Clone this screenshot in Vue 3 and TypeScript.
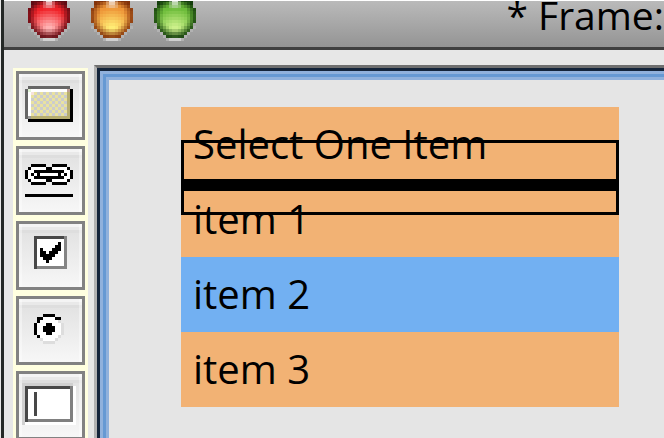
<script setup lang="ts">
import { ref } from 'vue'

interface Layer {
  color: string
  d: string
}
interface Tool {
  name: string
  layers: Layer[]
}

// Each run is [column, row, width, height] on the 23-cell button grid.
type Run = [number, number, number, number]
const draw = (runs: Run[]): string =>
  runs.map(([x, y, w, h]) => `M${x} ${y}h${w}v${h}h${-w}z`).join('')

const checker: Run[] = []
for (let y = 7; y < 15; y++) {
  for (let x = 5; x < 17; x++) {
    if ((x + y) % 2 === 1) checker.push([x, y, 1, 1])
  }
}

const tools: Tool[] = [
  {
    name: 'Button',
    layers: [
      { color: '#666', d: draw([[4, 5, 14, 1], [3, 6, 1, 10]]) },
      { color: '#000', d: draw([[18, 6, 1, 11], [4, 16, 15, 1]]) },
      { color: '#fff', d: draw([[4, 6, 13, 1], [4, 6, 1, 9]]) },
      { color: '#ccc', d: draw([[5, 7, 12, 8]]) },
      { color: '#e9e2a0', d: draw(checker) },
      { color: '#b7ae70', d: draw([[17, 7, 1, 9], [5, 15, 13, 1]]) },
      { color: '#e2f5d8', d: draw([[4, 6, 1, 1]]) },
      { color: '#f7e2dc', d: draw([[5, 7, 1, 1]]) },
      { color: '#c0a098', d: draw([[17, 6, 1, 1]]) },
      { color: '#999', d: draw([[4, 15, 1, 1]]) },
    ],
  },
  {
    name: 'Link',
    layers: [
      { color: '#fff', d: draw([[5, 7, 5, 1], [12, 7, 5, 1], [4, 8, 14, 3], [5, 11, 5, 1], [12, 11, 5, 1]]) },
      {
        color: '#000',
        d: draw([
          [5, 6, 5, 1], [12, 6, 5, 1], [4, 7, 1, 1], [10, 7, 2, 1], [17, 7, 1, 1],
          [3, 8, 1, 3], [18, 8, 1, 3], [6, 8, 10, 1], [5, 9, 1, 1], [7, 9, 1, 1],
          [14, 9, 1, 1], [16, 9, 1, 1], [6, 10, 10, 1], [4, 11, 1, 1], [10, 11, 2, 1],
          [17, 11, 1, 1], [5, 12, 5, 1], [12, 12, 5, 1], [3, 16, 16, 1],
        ]),
      },
    ],
  },
  {
    name: 'Check box',
    layers: [
      { color: '#848484', d: draw([[6, 5, 11, 11]]) },
      { color: '#484848', d: draw([[6, 5, 10, 1], [6, 5, 1, 11]]) },
      { color: '#fff', d: draw([[7, 6, 9, 9]]) },
      {
        color: '#000',
        d: draw([
          [14, 7, 1, 3], [13, 8, 1, 3], [12, 9, 1, 3], [11, 10, 1, 3],
          [8, 9, 1, 3], [9, 10, 1, 3], [10, 11, 1, 3],
        ]),
      },
    ],
  },
  {
    name: 'Radio button',
    layers: [
      { color: '#fff', d: draw([[9, 7, 4, 8], [7, 9, 8, 4], [8, 8, 6, 6]]) },
      {
        color: '#000',
        d: draw([
          [9, 6, 4, 1], [7, 7, 2, 1], [13, 7, 2, 1], [7, 8, 1, 1], [6, 9, 1, 4],
          [7, 13, 1, 1], [10, 9, 2, 4], [9, 10, 4, 2],
        ]),
      },
      {
        color: '#ddd',
        d: draw([[14, 8, 1, 1], [15, 9, 1, 4], [14, 13, 1, 1], [13, 14, 1, 1], [8, 14, 1, 1], [9, 15, 4, 1]]),
      },
    ],
  },
  {
    name: 'Text field',
    layers: [
      { color: '#d0d0d0', d: draw([[2, 4, 17, 1], [2, 4, 1, 14]]) },
      { color: '#fff', d: draw([[19, 5, 1, 13], [3, 17, 17, 1], [4, 6, 14, 10]]) },
      { color: '#808080', d: draw([[18, 5, 1, 12], [4, 16, 15, 1]]) },
      { color: '#484848', d: draw([[3, 5, 15, 1], [3, 5, 1, 12], [6, 7, 1, 8]]) },
    ],
  },
]

type Rgb = [number, number, number]
interface Cell {
  x: number
  y: number
  fill: string
}

const clamp = (v: number): number => Math.min(1, Math.max(0, v))
const mix = (a: Rgb, b: Rgb, t: number): Rgb => [
  a[0] + (b[0] - a[0]) * t,
  a[1] + (b[1] - a[1]) * t,
  a[2] + (b[2] - a[2]) * t,
]

// Left inset of the ball on each row of its 14-cell-wide grid.
const insets = [1, 1, 1, 0, 0, 0, 0, 0, 1, 1, 2, 3, 4]

function shade(mid: Rgb, glow: Rgb, edge: Rgb): Cell[] {
  const cells: Cell[] = []
  insets.forEach((inset, y) => {
    for (let x = inset; x < 14 - inset; x++) {
      const dx = (x - 6.5) / 7
      const dy = (y - 5.2) / 7
      let c = mix(mid, glow, clamp(1.15 - Math.hypot(dx * 1.1, (y - 9.5) / 6)))
      const rim = clamp((Math.hypot(dx, dy) - 0.6) / 0.4)
      const top = clamp((3 - y) / 8)
      c = mix(c, edge, clamp(rim * 0.9 + top))
      if (y < 3 && x > 4 && x < 9) {
        c = mix(c, [255, 255, 255], x === 6 || x === 7 ? 0.8 - y * 0.2 : 0.25)
      }
      cells.push({ x, y, fill: `rgb(${c.map(Math.round).join(',')})` })
    }
  })
  return cells
}

const lights = [
  { name: 'Close', cells: shade([240, 34, 40], [255, 178, 178], [96, 12, 20]) },
  { name: 'Minimize', cells: shade([238, 150, 56], [255, 236, 116], [130, 50, 10]) },
  { name: 'Zoom', cells: shade([108, 188, 58], [204, 240, 138], [20, 62, 12]) },
]
const halo = draw([
  [0, 9, 1, 1], [1, 10, 1, 1], [2, 11, 1, 1], [3, 12, 1, 1],
  [13, 9, 1, 1], [12, 10, 1, 1], [11, 11, 1, 1], [10, 12, 1, 1], [4, 13, 6, 1],
])

const items = ['item 1', 'item 2', 'item 3']
const selected = ref('item 2')
</script>

<template>
  <main class="window">
    <header class="titlebar">
      <div class="lights">
        <button v-for="l in lights" :key="l.name" class="light" type="button" :aria-label="l.name">
          <svg viewBox="0 0 14 15" shape-rendering="crispEdges" aria-hidden="true">
            <path :d="halo" fill="#b2b2b2" />
            <path d="M5 13h4v1h-4z" fill="#d0d0d0" />
            <rect v-for="(c, i) in l.cells" :key="i" :x="c.x" :y="c.y" width="1" height="1" :fill="c.fill" />
          </svg>
        </button>
      </div>
      <h1 class="title">* Frame:</h1>
    </header>

    <div class="workspace">
      <nav class="palette" aria-label="Widgets">
        <button v-for="t in tools" :key="t.name" class="tool" type="button" :aria-label="t.name">
          <svg viewBox="1 1 21 21" shape-rendering="crispEdges" aria-hidden="true">
            <path v-for="(layer, i) in t.layers" :key="i" :d="layer.d" :fill="layer.color" />
          </svg>
        </button>
      </nav>

      <section class="canvas">
        <div class="edge">
          <div class="menu">
            <div class="heading">Select One Item</div>
            <button
              v-for="item in items"
              :key="item"
              type="button"
              class="item"
              :class="{ selected: item === selected }"
              @click="selected = item"
            >
              {{ item }}
            </button>
            <div class="marker"></div>
          </div>
        </div>
      </section>
    </div>
  </main>
</template>

<style>
body {
  background: #e7e7e7;
}
html,
body {
  height: 100%;
  overflow: hidden;
}
#app {
  height: 100%;
}
</style>

<style scoped>
* {
  box-sizing: border-box;
}
.window {
  display: flex;
  flex-direction: column;
  height: 100%;
  margin-left: 1px;
  border-left: 3px solid #242826;
  overflow: hidden;
  font-family: 'Open Sans', 'Noto Sans', sans-serif;
  font-size: 40px;
  color: #000;
}
button {
  margin: 0;
  padding: 0;
  border: 0;
  background: none;
  font: inherit;
  color: inherit;
}
.titlebar {
  display: flex;
  flex: none;
  justify-content: space-between;
  height: 50px;
  padding-left: 24px;
  border-top: 1px solid #fff;
  border-bottom: 3px solid #404040;
  background: linear-gradient(#bababa, #949494);
  overflow: hidden;
}
.lights {
  display: flex;
  gap: 21px;
  margin-top: -2px;
}
.light {
  width: 42px;
  height: 45px;
}
.light svg,
.tool svg {
  display: block;
  width: 100%;
}
.title {
  flex: none;
  margin: 0;
  font-size: 39px;
  font-weight: 400;
  line-height: 28px;
  white-space: nowrap;
}
.workspace {
  display: flex;
  flex: 1;
  min-height: 0;
  padding: 15px 0 0 9px;
  gap: 6px;
  background: #e7e7e7;
}
.palette {
  display: flex;
  flex: none;
  flex-direction: column;
  gap: 6px;
  margin-top: 3px;
  padding: 3px;
  background: #ffffe0;
}
.tool {
  flex: none;
  width: 69px;
  height: 69px;
  border: 3px solid #828282;
  background: linear-gradient(#f4f4f4 3px, #e9e9e9 3px 6px, #dedede 6px 9px, #e3e3e3 9px, #f7f7f7);
  box-shadow: inset 3px 0 rgba(255, 255, 255, 0.4), inset -3px 0 rgba(255, 255, 255, 0.4);
}
.canvas {
  flex: 1;
  border-top: 3px solid #6f6f6f;
  border-left: 3px solid #b2b2b2;
}
.edge {
  height: 100%;
  padding: 36px 45px 0 81px;
  border-top: 3px solid #14243a;
  border-left: 3px solid #14243a;
  background: #e5e5e5;
  box-shadow: inset 3px 3px #90b1dc, inset 6px 6px #6699d3, inset 9px 9px #90b1dc;
}
.menu {
  position: relative;
  background: #f2b274;
  line-height: 73px;
}
.heading,
.item {
  display: block;
  width: 100%;
  height: 75px;
  padding: 0 12px 2px;
  text-align: left;
  white-space: nowrap;
}
.item.selected {
  background: #72b0f2;
}
.marker {
  position: absolute;
  top: 33px;
  left: 0;
  right: 0;
  height: 75px;
  border: 3px solid #000;
  background: linear-gradient(#000, #000) 0 36px / 100% 12px no-repeat;
  pointer-events: none;
}
</style>
